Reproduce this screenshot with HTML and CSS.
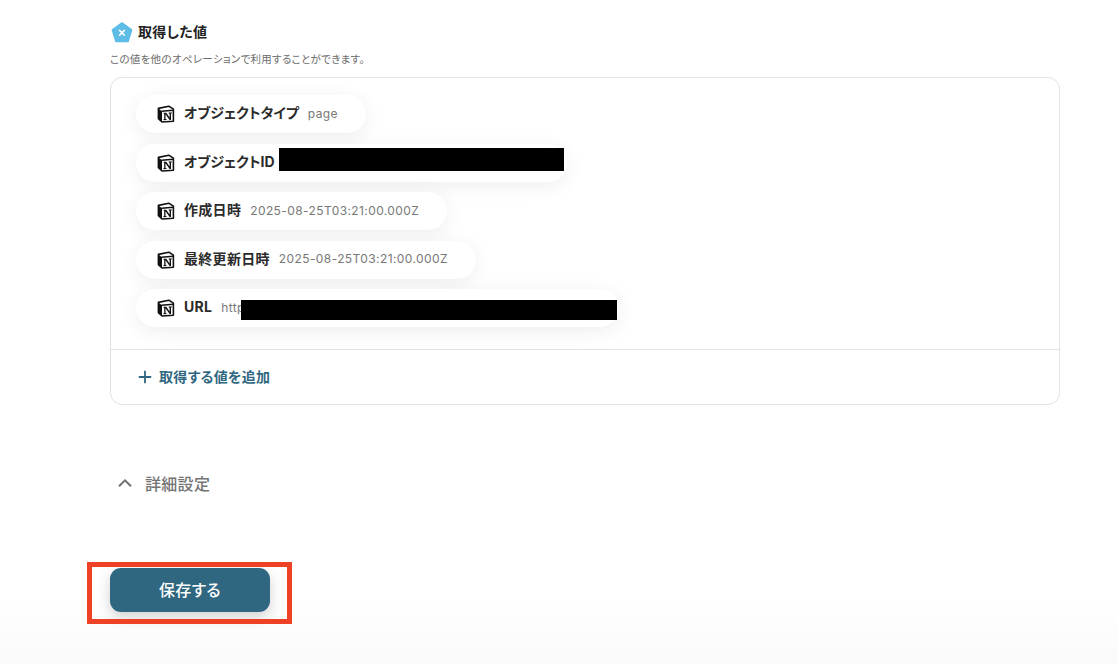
FILE: index.html
```html
<!DOCTYPE html>
<html lang="ja">
<head>
    <meta charset="UTF-8">
    <title>取得した値</title>
    <link rel="stylesheet" href="styles.css">
</head>
<body>
    <svg class="defs" width="0" height="0">
        <symbol id="notion" viewBox="0 0 18 18">
            <path d="M1.4 3.4 L11.8 1.2 L16.4 4.2 L16.4 16.2 L5 17 L1.4 13.6 Z" fill="#fff" stroke="#111" stroke-width="1.6" stroke-linejoin="round"/>
            <path d="M1.4 3.4 L5 6.2 L5 17 L1.4 13.6 Z" fill="#111"/>
            <path d="M4.6 6.2 L16.4 5.2" fill="none" stroke="#111" stroke-width="1.6"/>
            <path d="M6.6 7.8 L9.3 7.7 L12.6 12.6 L12.6 8.7 L11.7 8.5 L11.7 7.6 L15 7.4 L15 8.3 L14 8.6 L14 15 L12.6 15 L8.5 9.2 L8.5 14 L9.6 14.2 L9.6 15 L6.4 15.2 L6.4 14.3 L7.2 14.1 L7.2 8.8 L6.6 8.7 Z" fill="#111"/>
        </symbol>
    </svg>

    <main class="page">
        <div class="heading">
            <svg class="pentagon" viewBox="0 0 22 22" width="22" height="22">
                <path d="M11 2 L20.6 9 L17 20.4 L5 20.4 L1.4 9 Z" fill="#5dbde6" stroke="#5dbde6" stroke-width="1.6" stroke-linejoin="round"/>
                <path d="M8.6 9.4 L13.4 14.2 M13.4 9.4 L8.6 14.2" stroke="#fff" stroke-width="1.6" stroke-linecap="round"/>
            </svg>
            <h2>取得した値</h2>
        </div>
        <p class="sub">この値を他のオペレーションで利用することができます。</p>

        <section class="card">
            <div class="pills">
                <div class="pill">
                    <svg class="n-icon"><use href="#notion"/></svg>
                    <span class="key key-kana">オブジェクトタイプ</span>
                    <span class="val">page</span>
                </div>
                <div class="pill">
                    <svg class="n-icon"><use href="#notion"/></svg>
                    <span class="key key-kana">オブジェクトID</span>
                    <span class="redact redact-id"></span>
                </div>
                <div class="pill">
                    <svg class="n-icon"><use href="#notion"/></svg>
                    <span class="key">作成日時</span>
                    <span class="val">2025-08-25T03:21:00.000Z</span>
                </div>
                <div class="pill">
                    <svg class="n-icon"><use href="#notion"/></svg>
                    <span class="key">最終更新日時</span>
                    <span class="val">2025-08-25T03:21:00.000Z</span>
                </div>
                <div class="pill">
                    <svg class="n-icon"><use href="#notion"/></svg>
                    <span class="key">URL</span>
                    <span class="val">http</span>
                    <span class="redact redact-url"></span>
                </div>
            </div>
            <div class="add-row">
                <svg viewBox="0 0 14 14" width="14" height="14"><path d="M7 .8 V13.2 M.8 7 H13.2" stroke="#2f6781" stroke-width="1.8"/></svg>
                <span>取得する値を追加</span>
            </div>
        </section>

        <div class="details">
            <svg viewBox="0 0 16 10" width="16" height="10"><path d="M2 8.2 L8 2.4 L14 8.2" fill="none" stroke="#6f6f6f" stroke-width="2"/></svg>
            <span>詳細設定</span>
        </div>

        <div class="save-wrap">
            <button class="save">保存する</button>
            <div class="marker"></div>
        </div>
    </main>
</body>
</html>
```

FILE: styles.css
```css
*{
    margin:0;
    padding:0;
    box-sizing:border-box;
}
html,body{
    height:100%;
    overflow:hidden;
}
body{
    background:linear-gradient(#fff 0, #fff 600px, #fafafa 664px);
    font-family:Inter,"Noto Sans CJK JP",sans-serif;
    font-feature-settings:"palt";
    color:#222;
}
.defs{
    position:absolute;
}
.page{
    width:950px;
    margin-left:110px;
    padding-top:21px;
}
.heading{
    display:flex;
    align-items:center;
    gap:5px;
    height:22px;
    margin-left:1px;
}
.heading h2{
    font-size:14px;
    font-weight:700;
    line-height:22px;
    letter-spacing:.3px;
    color:#222;
}
.sub{
    margin-top:9px;
    font-size:10.5px;
    line-height:15px;
    letter-spacing:.3px;
    color:#6b6b6b;
}
.card{
    margin-top:10px;
    height:328px;
    border:1px solid #e2e2e2;
    border-radius:12px;
    display:flex;
    flex-direction:column;
}
.pills{
    height:272px;
    padding:17px 0 0 25px;
    display:flex;
    flex-direction:column;
    align-items:flex-start;
    gap:10.5px;
    border-bottom:1px solid #e2e2e2;
}
.pill{
    display:flex;
    align-items:center;
    height:38px;
    padding:0 28px 0 21px;
    border-radius:19px;
    background:#fff;
    box-shadow:0 4px 20px rgba(0,0,0,.07);
    white-space:nowrap;
}
.n-icon{
    width:18px;
    height:18px;
    margin-right:9px;
    flex:none;
}
.key{
    font-size:14px;
    font-weight:700;
    letter-spacing:.3px;
    line-height:18px;
    margin-top:-2px;
    color:#2b2b2b;
}
.key-kana{
    letter-spacing:0;
}
.val{
    margin-left:9px;
    font-size:12px;
    letter-spacing:.4px;
    line-height:16px;
    margin-top:-1px;
    color:#777;
}
.redact{
    display:block;
    background:#000;
}
.redact-id{
    width:285px;
    height:23px;
    margin:-6px -25px 0 4px;
}
.redact-url{
    width:376px;
    height:20px;
    margin:4px -26px 0 -4px;
}
.add-row{
    flex:1;
    display:flex;
    align-items:center;
    gap:7px;
    padding-left:27px;
    font-size:14px;
    font-weight:700;
    letter-spacing:.3px;
    color:#2f6781;
}
.add-row span{
    margin-top:-3px;
}
.details{
    display:flex;
    align-items:center;
    gap:12px;
    margin-top:66px;
    padding-left:7px;
    height:24px;
    font-size:16px;
    font-weight:500;
    letter-spacing:.3px;
    color:#747474;
}
.save-wrap{
    position:relative;
    width:160px;
    margin-top:73px;
}
.save{
    display:block;
    width:160px;
    height:44px;
    padding-bottom:2px;
    border:none;
    border-radius:11px;
    background:#2f6781;
    color:#fff;
    font-family:inherit;
    font-feature-settings:inherit;
    font-size:16px;
    font-weight:500;
    letter-spacing:.3px;
    box-shadow:0 5px 14px rgba(0,0,0,.18);
}
/* annotation frame over the button */
.marker{
    position:absolute;
    left:-23px;
    top:-6px;
    width:205px;
    height:62px;
    border:5px solid #ee4125;
}
```
